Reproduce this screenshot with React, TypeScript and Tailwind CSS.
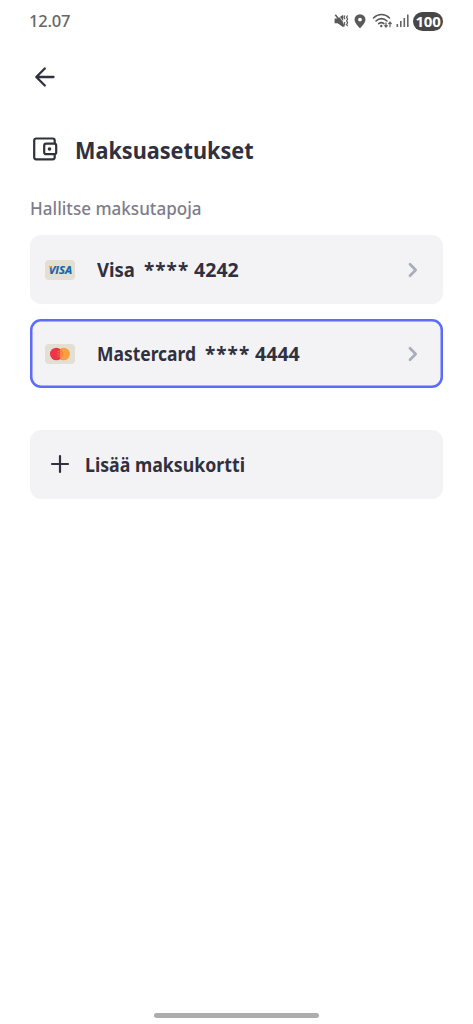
import React from "react";

function StatusIcons() {
  return (
    <div className="flex items-center">
      <svg width="16" height="16" viewBox="0 0 16 16" fill="none" stroke="#5a5a5a" className="mr-[3px]">
        <path d="M0.600 5.500h3L9.200 1.800v12.400L3.600 10.200h-3z" fill="#5a5a5a" stroke="none" />
        <path d="M3.600 1.400L11 10.800" stroke="#fff" strokeWidth="0.800" />
        <path d="M1.300 1.800L10.400 13.400" strokeWidth="1.600" />
        <path d="M11 2.500l-1 1.800 1 1.800M11 9l-.8 1.500.8 1.500M13.600 2.500l-1 1.800 1 1.800-1 1.800 1 1.800-1 1.800 1 1.600" strokeWidth="1.200" />
      </svg>
      <svg width="14" height="16" viewBox="0 0 14 16" className="mr-[5px]">
        <path fillRule="evenodd" fill="#5a5a5a" d="M7 1.200a5.500 5.500 0 0 0-5.500 5.500C1.500 10.200 7 15.200 7 15.200s5.500-5 5.500-8.500A5.500 5.500 0 0 0 7 1.200zm0 3.500a1.900 1.900 0 1 1 0 3.800 1.900 1.900 0 0 1 0-3.800z" />
      </svg>
      <svg width="22" height="16" viewBox="0 0 22 16" fill="none" stroke="#5a5a5a" strokeWidth="1.600" strokeLinecap="round" className="mr-[2px]">
        <path d="M1.500 5C6.200 0.400 12.800 0.400 17.500 5M4 8c3.200-3.200 7.800-3.200 11 0M6.700 10.700c1.700-1.500 3.500-1.500 5.200 0" />
        <circle cx="9.300" cy="13" r="1.200" fill="#5a5a5a" stroke="none" />
        <path d="M14 9.800v4.200M12.700 12.700l1.300 1.400 1.300-1.400M18 13.700V9.300M16.700 10.600l1.300-1.400 1.300 1.400" strokeWidth="1.200" />
      </svg>
      <svg width="14" height="16" viewBox="0 0 14 16" fill="#666666" className="mr-[3px]">
        <rect x="0.500" y="11" width="1.600" height="3" />
        <rect x="4" y="8" width="1.600" height="6" />
        <rect x="7.500" y="5" width="1.600" height="9" />
        <rect x="11" y="1.500" width="1.600" height="12.500" />
      </svg>
      <span className="flex h-[19px] w-[30px] items-center justify-center rounded-full bg-[#474747] text-[15px] font-bold leading-[19px] tracking-[-0.200px] text-white">
        100
      </span>
    </div>
  );
}

function CardBadge({ brand }: { brand: "visa" | "mastercard" }) {
  return (
    <svg width="30" height="20" viewBox="0 0 30 20" className="shrink-0">
      <rect width="30" height="20" rx="4" fill="#e3dfd2" />
      {brand === "visa" ? (
        <>
          <text x="3.700" y="14" fontFamily="Open Sans, sans-serif" fontSize="11.300" fontWeight="700" fontStyle="italic" fill="#1464ae" stroke="#1464ae" strokeWidth="0.200" textLength="23.300" lengthAdjust="spacingAndGlyphs">
            VISA
          </text>
          <path d="M3 5.900h3l1.300 2.700C6 7.400 4.500 6.500 3 5.900z" fill="#f5ad28" />
        </>
      ) : (
        <>
          <circle cx="18.600" cy="10" r="6.300" fill="#fa9f3f" />
          <circle cx="11.300" cy="10" r="6.300" fill="#ee3448" />
          <path d="M15 4.900a6.300 6.300 0 0 1 0 10.200z" fill="#fa9f3f" />
          <path d="M12.300 7.500H17M12 9.300h5.200M12 11.100h5M12.700 12.900H16.500" stroke="#f36b42" strokeWidth="0.800" />
        </>
      )}
    </svg>
  );
}

function Chevron() {
  return (
    <svg width="10" height="16" viewBox="0 0 10 16" fill="none" stroke="#abacbb" strokeWidth="2.700" strokeLinecap="round" strokeLinejoin="round" className="ml-auto mr-[25px]">
      <path d="M2 2.300L7.700 8 2 13.700" />
    </svg>
  );
}

function PaymentRow({ brand, digits, selected }: { brand: "visa" | "mastercard"; digits: string; selected?: boolean }) {
  return (
    <button
      className={
        "flex h-[69px] w-full items-center rounded-[11px] bg-[#f3f3f6] pl-[15px] text-left " +
        (selected ? "shadow-[inset_0_0_0_2.500px_#5d6bfa]" : "")
      }
    >
      <CardBadge brand={brand} />
      <span className="ml-[22px] mt-px flex whitespace-nowrap text-[19px] font-bold leading-[26px]">
        {brand === "visa" ? (
          <span className="w-[47px]">
            <span className="inline-block origin-left scale-x-[0.974]">Visa</span>
          </span>
        ) : (
          <span className="w-[108px]">
            <span className="inline-block origin-left scale-x-[0.918]">Mastercard</span>
          </span>
        )}
        <span className="w-[50px] tracking-[1px]">****</span>
        <span className="inline-block origin-left scale-x-[1.030]">{digits}</span>
      </span>
      <Chevron />
    </button>
  );
}

export default function App() {
  return (
    <div className="flex h-[1024px] w-[473px] flex-col overflow-hidden bg-white font-['Noto_Sans',sans-serif] text-[#30303f]">
      <header className="flex h-[42px] items-center justify-between pl-[29px] pr-[30px]">
        <span className="text-[16.500px] font-medium tracking-[-0.200px] text-[#666666]">12.07</span>
        <StatusIcons />
      </header>
      <button className="ml-[34px] mt-[24px] h-[22px] w-[22px]" aria-label="Takaisin">
        <svg width="22" height="22" viewBox="0 0 22 22" fill="none" stroke="#30303f" strokeWidth="2.300" strokeLinecap="round" strokeLinejoin="round">
          <path d="M19.500 11H2.500M10.800 2.500L2.300 11l8.500 8.500" />
        </svg>
      </button>
      <div className="mt-[42px] flex h-[40px] items-center pl-[33px]">
        <svg width="26" height="24" viewBox="0 0 26 24" fill="none" stroke="#30303f" strokeWidth="2.200" strokeLinejoin="round" className="mb-[2px]">
          <path d="M21.700 6.500V3.500a2 2 0 0 0-2-2H3.200a2 2 0 0 0-2 2v16.800a2 2 0 0 0 2 2h16.500a2 2 0 0 0 2-2V17" />
          <rect x="11.200" y="6.700" width="12" height="10.500" rx="2" />
          <circle cx="16.500" cy="12" r="1.800" fill="#30303f" stroke="none" />
        </svg>
        <h1 className="ml-[16px] origin-left scale-x-[0.902] whitespace-nowrap text-[24px] font-bold leading-[34px]">Maksuasetukset</h1>
      </div>
      <main className="flex flex-col px-[30px]">
        <p className="mt-[26px] h-[24px] origin-left scale-x-[0.975] text-[17.500px] font-medium leading-[24px] text-[#7d7d8b]">Hallitse maksutapoja</p>
        <div className="mt-[15px] flex flex-col gap-[15px]">
          <PaymentRow brand="visa" digits="4242" />
          <PaymentRow brand="mastercard" digits="4444" selected />
        </div>
        <button className="mt-[42px] flex h-[69px] items-center rounded-[11px] bg-[#f3f3f6] pl-[20px] text-left text-[19px] font-bold leading-[26px]">
          <svg width="20" height="20" viewBox="0 0 20 20" stroke="#30303f" strokeWidth="2.200" strokeLinecap="round" className="mb-[1px]">
            <path d="M10 2v16M2 10h16" />
          </svg>
          <span className="ml-[15px] origin-left scale-x-[0.933] whitespace-nowrap">Lisää maksukortti</span>
        </button>
      </main>
      <div className="mb-[6px] ml-[154px] mt-auto h-[5px] w-[165px] rounded-full bg-[#adadad]" />
    </div>
  );
}
